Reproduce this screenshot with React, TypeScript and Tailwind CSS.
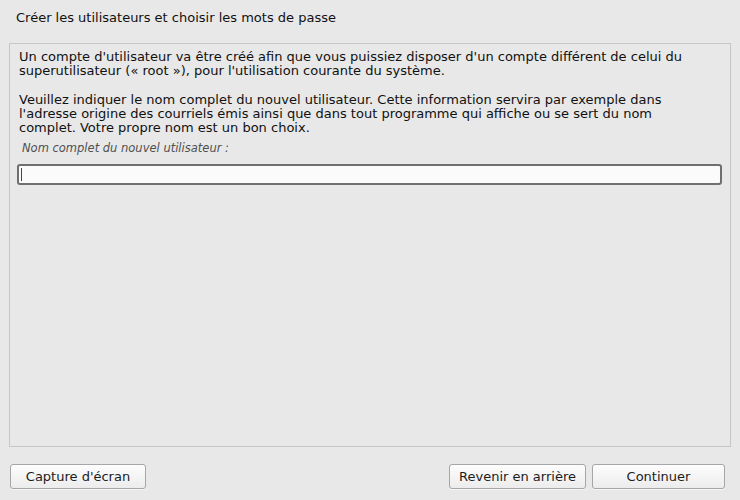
const font = { fontFamily: '"DejaVu Sans", Verdana, sans-serif' }

function Button({ label, className }: { label: string; className: string }) {
  return (
    <button
      className={`h-[25px] rounded-[3px] border border-[#a6a6a6] bg-gradient-to-b from-[#fdfdfd] to-[#ececec] text-[13px] text-[#1c1c1c] shadow-[0_1px_0_rgba(255,255,255,0.6)] ${className}`}
    >
      {label}
    </button>
  )
}

export default function App() {
  return (
    <div
      className="flex h-[500px] w-[740px] flex-col bg-[#e8e8e8] text-[13px] leading-[14px] text-[#111111]"
      style={font}
    >
      <div className="pl-[16px] pt-[11px]">Créer les utilisateurs et choisir les mots de passe</div>

      <div className="mx-[9px] mt-[18px] flex h-[404px] flex-col border border-[#c6c6c6] pt-[6px]">
        <div className="pl-[9px] pr-[30px]">
          <p>
            Un compte d'utilisateur va être créé afin que vous puissiez disposer d'un compte différent de celui du
            superutilisateur (« root »), pour l'utilisation courante du système.
          </p>
          <p className="mt-[15px]">
            Veuillez indiquer le nom complet du nouvel utilisateur. Cette information servira par exemple dans
            l'adresse origine des courriels émis ainsi que dans tout programme qui affiche ou se sert du nom
            complet. Votre propre nom est un bon choix.
          </p>
          <p className="mt-[6px] pl-[3px] text-[11.5px] italic text-[#505050]">Nom complet du nouvel utilisateur :</p>
        </div>
        <div className="ml-[7px] mr-[8px] mt-[9px] flex h-[21px] items-center rounded-[3px] border-2 border-[#6f6f6f] bg-[#fbfbfb] px-[2px]">
          <span className="h-[13px] w-px bg-[#444]" />
        </div>
      </div>

      <div className="mt-[17px] flex pl-[10px] pr-[15px]">
        <Button label="Capture d'écran" className="w-[136px]" />
        <div className="flex-1" />
        <Button label="Revenir en arrière" className="w-[137px]" />
        <Button label="Continuer" className="ml-[6px] w-[133px]" />
      </div>
    </div>
  )
}
